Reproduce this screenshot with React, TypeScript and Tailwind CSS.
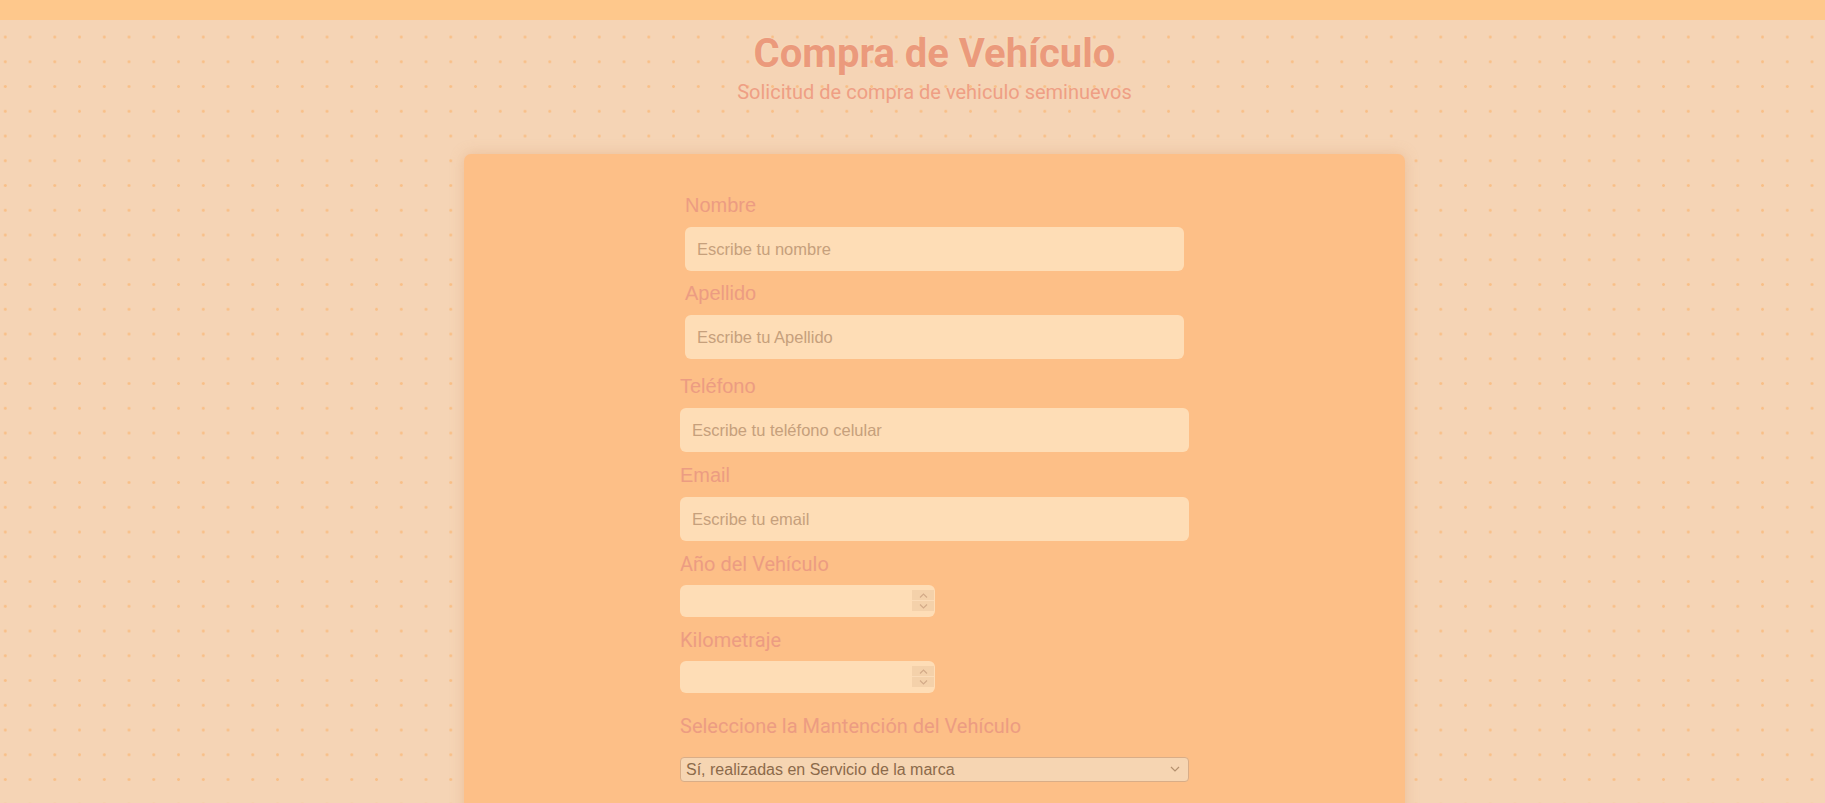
import React from 'react';

const dotsBg =
  'bg-[#f5d4b5] bg-[radial-gradient(circle,#f8bf87_1.1px,transparent_1.7px)] bg-[length:24.76px_24.76px] bg-[position:-7.1px_-0.1px]';

// Field label in the Tahoma-like face (top group)
function PlainLabel({ children }: { children: React.ReactNode }) {
  return (
    <label className="block font-['Liberation_Sans',Arial,sans-serif] text-[20px] leading-[24px] text-[#ec9c82]">
      {children}
    </label>
  );
}

// Field label in Roboto (lower fields)
function RobotoLabel({ children }: { children: React.ReactNode }) {
  return (
    <label className="block font-['Roboto',sans-serif] text-[20px] leading-[24px] text-[#ec9c82]">
      {children}
    </label>
  );
}

function TextInput({ placeholder, type = 'text' }: { placeholder: string; type?: string }) {
  return (
    <input
      type={type}
      placeholder={placeholder}
      className="block w-full h-[44px] rounded-[6px] bg-[#feddb6] px-[12px] font-['Liberation_Sans',Arial,sans-serif] text-[16.5px] text-[#9a7555] placeholder:text-[#c6a07c] outline-none"
    />
  );
}

// Number field with the stepper drawn on top (the native one only shows on hover)
function NumberInput() {
  return (
    <div className="relative w-[255px]">
      <input
        type="number"
        className="block w-full h-[32px] rounded-[6px] bg-[#feddb6] pl-[8px] pr-[28px] font-['Liberation_Sans',Arial,sans-serif] text-[16px] text-[#9a7555] outline-none [appearance:textfield] [&::-webkit-inner-spin-button]:appearance-none"
      />
      <div className="pointer-events-none absolute right-[1px] top-[5px] flex h-[21px] w-[22px] flex-col bg-[#f4d1aa]">
        <div className="flex flex-1 items-center justify-center border-b border-[#fbdcb9]">
          <svg width="9" height="5" viewBox="0 0 9 5" fill="none">
            <path d="M1 4.5l3.5-3.5 3.5 3.5" stroke="#d3aa88" strokeWidth="1.1" />
          </svg>
        </div>
        <div className="flex flex-1 items-center justify-center">
          <svg width="9" height="5" viewBox="0 0 9 5" fill="none">
            <path d="M1 .5l3.5 3.5 3.5-3.5" stroke="#d3aa88" strokeWidth="1.1" />
          </svg>
        </div>
      </div>
    </div>
  );
}

export default function App() {
  return (
    <div className={`min-h-screen ${dotsBg}`}>
      {/* top strip */}
      <div className="h-[20px] bg-[#fec88c]" />

      <div className="pl-[44px]">
        {/* Heading */}
        <header className="pt-[10px] text-center">
          <h1 className="font-['Roboto',sans-serif] font-bold text-[40px] leading-[48px] text-[#eb9a7c] [text-shadow:0_0_2px_#fbe0c0]">
            Compra de Vehículo
          </h1>
          <p className="mt-[2px] font-['Roboto',sans-serif] text-[20px] leading-[24px] text-[#ef9f84]">
            Solicitud de compra de vehiculo seminuevos
          </p>
        </header>

        {/* Form card */}
        <div className="mx-auto mt-[50px] w-[941px] h-[700px] rounded-[7px] bg-[#fdbf87] pt-[39px] shadow-[0_0_14px_rgba(214,150,100,0.35)]">
          <div className="mx-auto w-[499px]">
            <PlainLabel>Nombre</PlainLabel>
            <div className="mt-[10px]">
              <TextInput placeholder="Escribe tu nombre" />
            </div>
            <div className="mt-[10px]">
              <PlainLabel>Apellido</PlainLabel>
            </div>
            <div className="mt-[10px]">
              <TextInput placeholder="Escribe tu Apellido" />
            </div>
          </div>

          <div className="mx-auto mt-[15px] w-[509px]">
            <PlainLabel>Teléfono</PlainLabel>
            <div className="mt-[10px]">
              <TextInput placeholder="Escribe tu teléfono celular" type="tel" />
            </div>
            <div className="mt-[11px]">
              <PlainLabel>Email</PlainLabel>
            </div>
            <div className="mt-[10px]">
              <TextInput placeholder="Escribe tu email" type="email" />
            </div>

            <div className="mt-[11px]">
              <RobotoLabel>Año del Vehículo</RobotoLabel>
            </div>
            <div className="mt-[9px]">
              <NumberInput />
            </div>
            <div className="mt-[11px]">
              <RobotoLabel>Kilometraje</RobotoLabel>
            </div>
            <div className="mt-[9px]">
              <NumberInput />
            </div>

            <div className="mt-[21px]">
              <RobotoLabel>Seleccione la Mantención del Vehículo</RobotoLabel>
            </div>
            <div className="relative mt-[19px]">
              <select
                defaultValue="si"
                className="block w-full h-[25px] appearance-none rounded-[4px] border border-[#d9ad87] bg-[#f6d5b2] pl-[5px] font-['Liberation_Sans',Arial,sans-serif] text-[16px] leading-[20px] text-[#8c6a4a] outline-none"
              >
                <option value="si">Sí, realizadas en Servicio de la marca</option>
                <option value="taller">Sí, realizadas en taller externo</option>
                <option value="no">No</option>
              </select>
              <svg
                className="pointer-events-none absolute right-[9px] top-[9px]"
                width="10"
                height="6"
                viewBox="0 0 10 6"
                fill="none"
              >
                <path d="M1 1l4 4 4-4" stroke="#b5916f" strokeWidth="1.2" />
              </svg>
            </div>
          </div>
        </div>
      </div>
    </div>
  );
}
